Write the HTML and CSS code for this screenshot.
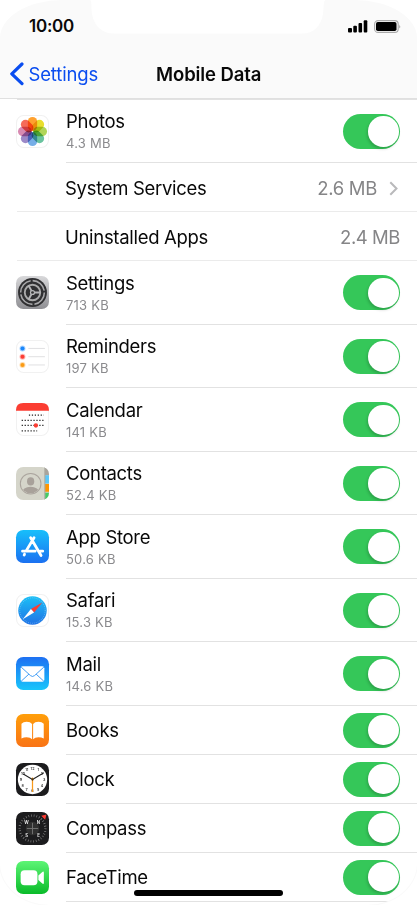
FILE: index.html
```
<!DOCTYPE html>
<html lang="en">
<head>
<meta charset="utf-8">
<title>Mobile Data</title>
<link rel="stylesheet" href="styles.css">
</head>
<body>
<main class="screen">
<header class="header">
  <svg class="notch" viewBox="0 0 236 34"><path d="M0 0H236C233 0 234 7 233 14C231 26 224 33.500 212 33.500H24C12 33.500 4 26 2 14C1 7 2 0 0 0Z" fill="#fff"/></svg>
  <div class="status">
    <span class="time">10:00</span>
    <span class="status-icons">
      <svg width="20" height="13" viewBox="0 0 20 13"><rect x="0" y="8" width="4" height="4.500" rx="1"/><rect x="5.300" y="5.800" width="3.600" height="6.700" rx="1"/><rect x="10.500" y="3" width="3.600" height="9.500" rx="1"/><rect x="15.700" y="0.300" width="3.600" height="12.200" rx="1"/></svg>
      <svg width="27" height="13" viewBox="0 0 27 13"><rect x=".6" y=".6" width="23.600" height="11.800" rx="3.500" fill="none" stroke="#aaa" stroke-width="1.100"/><rect x="2" y="2" width="20.500" height="9" rx="1.800"/><path d="M25.300 4.500Q27 6.500 25.300 8.500Z" fill="#999"/></svg>
    </span>
  </div>
  <nav class="nav">
    <a class="back"><svg width="14" height="24" viewBox="0 0 14 24"><path d="M12 2L1.800 11.800L12 21.600" fill="none" stroke="#0a4df0" stroke-width="3.200" stroke-linecap="round" stroke-linejoin="round"/></svg><span>Settings</span></a>
    <h1>Mobile Data</h1>
  </nav>
</header>
<section class="list">
<div class="row tall">
  <svg class="icon" viewBox="0 0 32 32"><rect x=".5" y=".5" width="31" height="31" rx="7" fill="#fff" stroke="#f1f1f1"/>
    <g class="petals"><rect x="11.500" y="1.900" width="9" height="13.500" rx="4.500" fill="#ff9a1f"/><rect x="11.500" y="1.900" width="9" height="13.500" rx="4.500" fill="#e8dc1c" transform="rotate(45 16 16)"/><rect x="11.500" y="1.900" width="9" height="13.500" rx="4.500" fill="#aad24c" transform="rotate(90 16 16)"/><rect x="11.500" y="1.900" width="9" height="13.500" rx="4.500" fill="#5fbf98" transform="rotate(135 16 16)"/><rect x="11.500" y="1.900" width="9" height="13.500" rx="4.500" fill="#6ba8e5" transform="rotate(180 16 16)"/><rect x="11.500" y="1.900" width="9" height="13.500" rx="4.500" fill="#9480c4" transform="rotate(225 16 16)"/><rect x="11.500" y="1.900" width="9" height="13.500" rx="4.500" fill="#d581ac" transform="rotate(270 16 16)"/><rect x="11.500" y="1.900" width="9" height="13.500" rx="4.500" fill="#f5604c" transform="rotate(315 16 16)"/></g></svg>
  <div class="body"><div class="text"><span class="name">Photos</span><span class="size">4.3 MB</span></div><i class="toggle"></i></div>
</div>
<div class="row plain"><span class="name">System Services</span><span class="value linked">2.6 MB</span><svg class="chevron" width="9" height="15" viewBox="0 0 9 15"><path d="M1.300 1.300L7.500 7.500L1.300 13.700" fill="none" stroke="#b9b9bb" stroke-width="2"/></svg></div>
<div class="row plain"><span class="name">Uninstalled Apps</span><span class="value">2.4 MB</span></div>
<div class="row tall">
  <svg class="icon" viewBox="0 0 32 32"><defs><linearGradient id="gs" x2="0" y2="1"><stop stop-color="#d8d8da"/><stop offset="1" stop-color="#8f8f93"/></linearGradient></defs><rect width="32" height="32" rx="7" fill="url(#gs)"/><circle cx="16" cy="16" r="14" fill="#303032"/><circle cx="16" cy="16" r="11.500" fill="none" stroke="#a8a8aa" stroke-width="1.500" stroke-dasharray="16 2"/><circle cx="16" cy="16" r="7.500" fill="none" stroke="#aaa" stroke-width="1.800"/><circle cx="16" cy="16" r="2.500" fill="#bbb"/><path d="M16 16H24M16 16L12 9M16 16L12 23" stroke="#b4b4b6" stroke-width="1.800"/><circle cx="16" cy="16" r="1.300" fill="#333"/></svg>
  <div class="body"><div class="text"><span class="name">Settings</span><span class="size">713 KB</span></div><i class="toggle"></i></div>
</div>
<div class="row tall">
  <svg class="icon" viewBox="0 0 32 32"><rect x=".5" y=".5" width="31" height="31" rx="7" fill="#fff" stroke="#f1f1f1"/><path d="M12 8.200H28M12 16.200H28M12 24.200H28" stroke="#dedee0" stroke-width=".9"/><g fill-opacity=".35"><circle cx="6.300" cy="8.200" r="2.900" fill="#1b87fb"/><circle cx="6.300" cy="16.200" r="2.900" fill="#fc3d34"/><circle cx="6.300" cy="24.200" r="2.900" fill="#fb9b15"/></g><circle cx="6.300" cy="8.200" r="2" fill="#1b87fb"/><circle cx="6.300" cy="16.200" r="2" fill="#fc3d34"/><circle cx="6.300" cy="24.200" r="2" fill="#fb9b15"/></svg>
  <div class="body"><div class="text"><span class="name">Reminders</span><span class="size">197 KB</span></div><i class="toggle"></i></div>
</div>
<div class="row tall">
  <svg class="icon" viewBox="0 0 32 32"><rect x=".5" y=".5" width="31" height="31" rx="7" fill="#fff" stroke="#f1f1f1"/><path d="M0 7.500V7Q0 0 7 0H25Q32 0 32 7V7.500Z" fill="#fb3d32"/><path d="M12.500 11.700H27M5.500 16.800H27M5.500 21.800H27M5.500 27H20.500" stroke="#222" stroke-width="1.200" stroke-dasharray="1.200 1.650"/><circle cx="19.300" cy="21.800" r="2.100" fill="#fb3d32"/></svg>
  <div class="body"><div class="text"><span class="name">Calendar</span><span class="size">141 KB</span></div><i class="toggle"></i></div>
</div>
<div class="row tall">
  <svg class="icon" viewBox="0 0 32 32"><defs><clipPath id="cc"><rect width="32" height="32" rx="7"/></clipPath><clipPath id="cp"><circle cx="14.200" cy="16.200" r="9.300"/></clipPath></defs><g clip-path="url(#cc)"><path fill="#d5d5ca" d="M0 0H32V32H0Z"/><path fill="#a9a49c" d="M28 0H32V8H28Z"/><path fill="#5ac8fa" d="M28 8H32V16H28Z"/><path fill="#ff9500" d="M28 16.500H32V24H28Z"/><path fill="#45cc65" d="M28 25H32V32H28Z"/><path d="M28 0V32" stroke="#a8a89e"/></g><circle cx="14.200" cy="16.200" r="10" fill="none" stroke="#aaa49d"/><g clip-path="url(#cp)" fill="#a8a19a"><ellipse cx="14.200" cy="14" rx="3.500" ry="4"/><ellipse cx="14.200" cy="24.500" rx="8.500" ry="5.300"/></g></svg>
  <div class="body"><div class="text"><span class="name">Contacts</span><span class="size">52.4 KB</span></div><i class="toggle"></i></div>
</div>
<div class="row tall">
  <svg class="icon" viewBox="0 0 32 32"><defs><linearGradient id="ga" x2="0" y2="1"><stop stop-color="#17bffb"/><stop offset="1" stop-color="#1b70f1"/></linearGradient></defs><rect width="32" height="32" rx="7" fill="url(#ga)"/><g stroke="#fff" stroke-width="2.700" stroke-linecap="round"><path d="M14.200 7.500L24.300 24.700M17.500 7.500L9.700 20.500M8.300 23.500L7.900 24.300M6.300 20.500H18.500M23.500 20.500H25.900"/></g></svg>
  <div class="body"><div class="text"><span class="name">App Store</span><span class="size">50.6 KB</span></div><i class="toggle"></i></div>
</div>
<div class="row tall">
  <svg class="icon" viewBox="0 0 32 32"><defs><linearGradient id="gf" x2="0" y2="1"><stop stop-color="#1cc0f6"/><stop offset="1" stop-color="#2072e5"/></linearGradient></defs><rect x=".5" y=".5" width="31" height="31" rx="7" fill="#fff" stroke="#f1f1f1"/><circle cx="16" cy="16" r="13.800" fill="url(#gf)"/><circle cx="16" cy="16" r="12.300" fill="none" stroke="#8ed1fa" stroke-width="1" stroke-opacity=".65" stroke-dasharray=".7 1.200"/><path d="M25.500 8.200L14.500 14.600L17.500 18Z" fill="#fb3d32"/><path d="M6.500 24.500L14.500 14.600L17.500 18Z" fill="#fff"/></svg>
  <div class="body"><div class="text"><span class="name">Safari</span><span class="size">15.3 KB</span></div><i class="toggle"></i></div>
</div>
<div class="row tall">
  <svg class="icon" viewBox="0 0 32 32"><defs><linearGradient id="gm" x2="0" y2="1"><stop stop-color="#1e70f2"/><stop offset="1" stop-color="#19c5fb"/></linearGradient></defs><rect width="32" height="32" rx="7" fill="url(#gm)"/><rect x="4.500" y="9" width="23" height="15" rx="2" fill="#fff"/><path d="M5 9.800L14 18Q16 19.800 18 18L27 9.800M5 23.500L12.500 16.600M27 23.500L19.500 16.600" fill="none" stroke="#3395f4" stroke-width=".9"/></svg>
  <div class="body"><div class="text"><span class="name">Mail</span><span class="size">14.6 KB</span></div><i class="toggle"></i></div>
</div>
<div class="row">
  <svg class="icon" viewBox="0 0 32 32"><defs><linearGradient id="gb" x2="0" y2="1"><stop stop-color="#ff9f0a"/><stop offset="1" stop-color="#f97316"/></linearGradient></defs><rect width="32" height="32" rx="7" fill="url(#gb)"/><path d="M15.600 9.800Q14 7.500 10.300 7.500Q7 7.500 5.300 9.500V23.800Q7.500 22.500 10.300 22.500Q14 22.500 15.600 24.600ZM16.600 9.800Q18.200 7.500 21.800 7.500Q25.200 7.500 26.900 9.500V23.800Q24.800 22.500 21.800 22.500Q18.200 22.500 16.600 24.600Z" fill="#fff"/></svg>
  <div class="body"><span class="name">Books</span><i class="toggle"></i></div>
</div>
<div class="row">
  <svg class="icon" viewBox="0 0 32 32"><rect width="32" height="32" rx="7" fill="#1c1c1e"/><circle cx="16" cy="16" r="14.200" fill="#fff"/><g class="numerals"><text x="16" y="6.800">12</text><text x="21.500" y="8.200">1</text><text x="25.200" y="12">2</text><text x="27.300" y="17.500">3</text><text x="25.300" y="23">4</text><text x="21.500" y="27">5</text><text x="16" y="28.500">6</text><text x="10.300" y="27">7</text><text x="6.500" y="23">8</text><text x="4.700" y="17.500">9</text><text x="6.800" y="12">10</text><text x="10.500" y="8.200">11</text></g><path d="M16 16L7 10.700M16 16L27 9.500" stroke="#222" stroke-width="1"/><path d="M16 14V28" stroke="#f99a1b" stroke-width="1.200"/><circle cx="16" cy="16" r="1.100" fill="#4b3413"/></svg>
  <div class="body"><span class="name">Clock</span><i class="toggle"></i></div>
</div>
<div class="row">
  <svg class="icon" viewBox="0 0 32 32"><rect width="32" height="32" rx="7" fill="#1c1c1e"/><circle cx="16" cy="16" r="12.500" fill="none" stroke="#8c8c8c" stroke-width="2.200" stroke-dasharray=".6 2"/><circle cx="16" cy="16" r="6.500" fill="#303030"/><path d="M10.500 16H21.500M16 10.500V21.500" stroke="#747474" stroke-width=".9"/><path d="M28.800 3.200L25.500 4L28 6.500Z" fill="#fc3b32" stroke="#fc3b32"/><g class="compass-points"><text x="10.300" y="12">W</text><text x="21.800" y="12">N</text><text x="10.300" y="24">S</text><text x="21.800" y="24">E</text></g></svg>
  <div class="body"><span class="name">Compass</span><i class="toggle"></i></div>
</div>
<div class="row last">
  <svg class="icon" viewBox="0 0 32 32"><defs><linearGradient id="gt" x2="0" y2="1"><stop stop-color="#5cf575"/><stop offset="1" stop-color="#0abb29"/></linearGradient></defs><rect width="32" height="32" rx="7" fill="url(#gt)"/><rect x="4.500" y="9" width="16.300" height="14.400" rx="3.800" fill="#fff"/><path d="M21.700 14L25.500 10.600Q27 9.500 27 11.300V21Q27 23 25.500 21.800L21.700 18.400Z" fill="#fff"/></svg>
  <div class="body"><span class="name">FaceTime</span><i class="toggle"></i></div>
</div>
</section>
<div class="home-bar"></div>
</main>
</body>
</html>
```
FILE: styles.css
```
* { box-sizing: border-box; }
body { margin: 0; background: #fff; font-family: Inter, "Liberation Sans", sans-serif; color: #090909; }
.screen { position: relative; width: 417px; height: 905px; overflow: hidden; background: #fff; border-radius: 0 0 50px 50px / 0 0 42px 42px; box-shadow: 0 0 0 1px #fafafa; }
.header { position: relative; height: 99px; background: #fafafa; border-bottom: 1px solid #e0e0e0; border-radius: 62px 62px 0 0 / 38px 38px 0 0; }
.notch { position: absolute; left: 90px; top: 0; width: 236px; height: 34px; }
.status { height: 50px; padding: 2px 16px 0 29px; display: flex; align-items: center; justify-content: space-between; }
.time { font-size: 17px; font-weight: 600; letter-spacing: -0.25px; }
.status-icons { display: flex; gap: 6px; align-items: center; }
.nav { height: 47px; display: grid; grid-template-columns: 156px 1fr; align-items: center; }
.back { display: flex; align-items: center; gap: 5px; padding-left: 9.500px; color: #0a4df0; font-size: 18.500px; letter-spacing: -0.15px; }
h1 { margin: 0; font-size: 18.500px; font-weight: 600; letter-spacing: -0.1px; }
.list { margin-left: 17px; border-top: 1px solid #e2e2e2; margin-top: -.5px; }
.row { display: flex; height: 49px; align-items: center; }
.tall { height: 63.500px; }
.icon { width: 33px; height: 33px; margin-left: -1px; flex: none; overflow: visible; }
.body { margin-left: 17px; height: 100%; flex: 1; display: flex; align-items: center; justify-content: space-between; padding: 1px 17px 0 0; border-bottom: 1px solid #e2e2e2; }
.text { display: flex; flex-direction: column; }
.name { font-size: 18.500px; line-height: 24px; letter-spacing: -0.3px; }
.size { font-size: 13px; line-height: 20px; color: #8a8a8d; letter-spacing: 0.22px; }
.plain { padding: 2px 17px 0 48px; border-bottom: 1.500px solid #ebebeb; }
.value { margin-left: auto; font-size: 18.500px; color: #858587; letter-spacing: -0.45px; }
.linked { letter-spacing: -0.3px; }
.chevron { margin: 0 2px 0 12px; }
.last .body { margin-right: 27px; padding-right: 0; }
.last .toggle { margin-right: -10px; }
.toggle { width: 57px; height: 35px; border-radius: 18px; background: #35c759; display: flex; align-items: center; justify-content: flex-end; padding-right: 1.500px; }
.toggle::after { content: ""; width: 30.500px; height: 30.500px; border-radius: 50%; background: #fff; box-shadow: -1px 2px 3px rgba(0,0,0,.18); }
.petals rect { mix-blend-mode: multiply; opacity: .93; }
.petals { isolation: isolate; }
.numerals { font-size: 3.600px; font-weight: 600; fill: #333; text-anchor: middle; }
.compass-points { font-size: 4.200px; font-weight: 700; fill: #e2e2e2; text-anchor: middle; }
.home-bar { position: absolute; left: 134px; top: 890px; width: 149px; height: 6px; border-radius: 3px; background: #000; }
```
